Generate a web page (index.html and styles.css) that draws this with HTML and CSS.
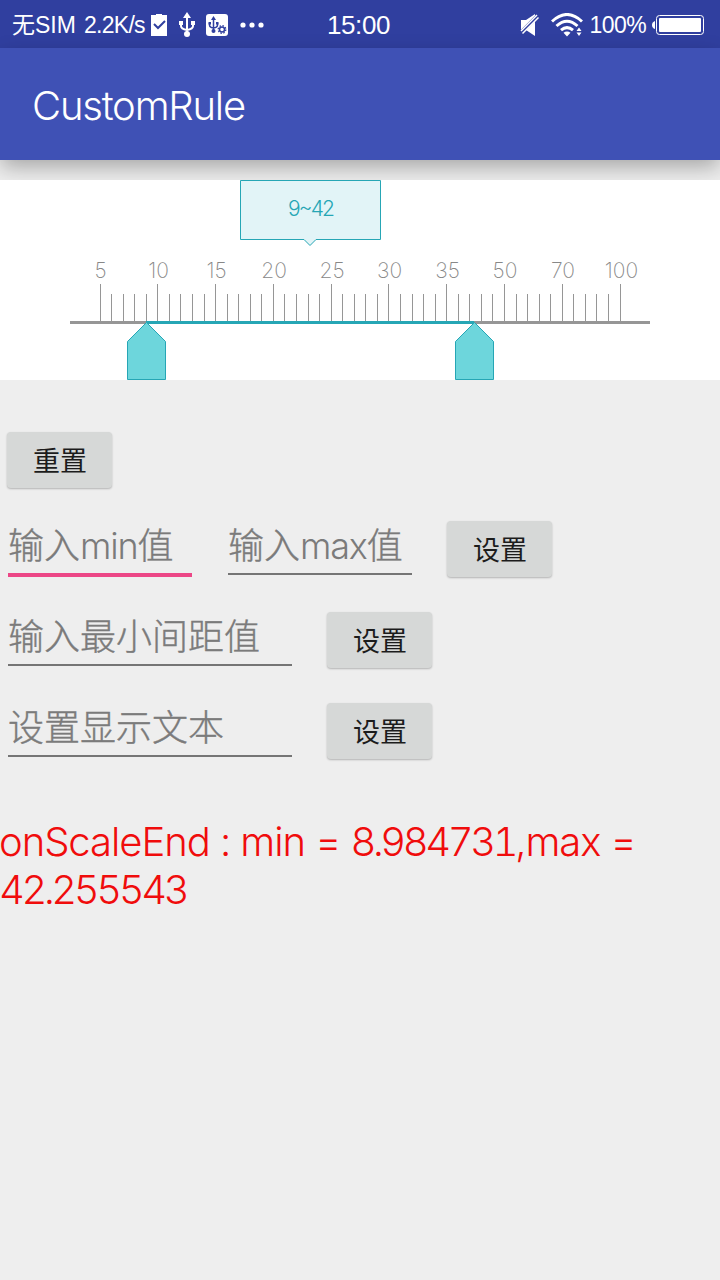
FILE: index.html
```
<!DOCTYPE html>
<html lang="zh-CN">
<head>
<meta charset="utf-8">
<title>CustomRule</title>
<link rel="stylesheet" href="styles.css">
</head>
<body>
<header class="status">
  <div class="status-left">
    <span class="sim">无SIM</span>
    <span class="speed">2.2K/s</span>
    <svg class="ic-clip" width="16" height="22" viewBox="0 0 16 22"><path fill="#fff" d="M0 1h5V0h6v1h5v21H0z"/><path fill="none" stroke="#303f9f" stroke-width="2" d="M3 10l4 4 7-7"/></svg>
    <svg class="ic-usb" width="16" height="26" viewBox="0 0 16 26"><path fill="none" stroke="#fff" stroke-width="2" d="M8 4v18M2 11v3q0 3 6 4q6-1 6-4v-3"/><path fill="#fff" d="M8 0l4 6H4zM0 9h4v4H0zM12 9h4v4h-4z"/><circle cx="8" cy="22" r="3" fill="#fff"/></svg>
    <svg class="ic-debug" width="22" height="22" viewBox="0 0 22 22"><rect width="22" height="22" rx="3" fill="#fff"/><path fill="none" stroke="#303f9f" stroke-width="1.5" d="M7.500 4v13M3.500 9v2q0 2.500 4 3q4-.5 4-3V9"/><path fill="#303f9f" d="M7.500 2l2.500 4H5zM2.500 8h2.500v2.500H2.500zM10 8h2.500v2.500H10z"/><circle cx="7.500" cy="17" r="2" fill="#303f9f"/><circle cx="16" cy="15.500" r="4.800" fill="#fff"/><circle cx="16" cy="15.500" r="2.500" fill="none" stroke="#303f9f" stroke-width="1.500"/><circle cx="16" cy="15.500" r="3.800" fill="none" stroke="#303f9f" stroke-width="1.300" stroke-dasharray="1.500 1.480"/></svg>
    <svg class="ic-more" width="24" height="6" viewBox="0 0 24 6" fill="#fff"><circle cx="3" cy="3" r="2.600"/><circle cx="12" cy="3" r="2.600"/><circle cx="21" cy="3" r="2.600"/></svg>
  </div>
  <span class="clock">15:00</span>
  <div class="status-right">
    <svg class="ic-mute" width="20" height="22" viewBox="0 0 20 22"><path fill="#fff" d="M1 6h5l9-6v22l-9-6H1z"/><path stroke="#303f9f" stroke-width="4" d="M0 19.500L18 1.500"/><path stroke="#fff" stroke-width="1.500" d="M1 17L17 1M2.500 19.500L18.500 3.500"/></svg>
    <svg class="ic-wifi" width="32" height="24" viewBox="0 0 32 24"><g fill="none" stroke="#fff" stroke-width="3"><path d="M1 8.500Q16-5.500 31 8.500"/><path d="M5.500 13Q16 3.500 26.500 13"/><path d="M10 17.200Q16 12 22 17.200"/></g><path fill="#fff" d="M12.500 19.700q3.500-2.500 7 0L16 23.500zM25.500 18l2.500-3.500 2.500 3.500zM25.500 19.500h5L28 23z"/></svg>
    <span class="percent">100%</span>
    <svg class="ic-batt" width="53" height="20" viewBox="0 0 53 20"><path fill="#fff" d="M3 6v8q-3-1-3-4t3-4z"/><rect x="4.500" y=".5" width="47" height="19" rx="3" fill="none" stroke="#fff"/><rect x="7" y="3" width="42" height="14" rx="1" fill="#fff"/></svg>
  </div>
</header>
<div class="toolbar"><h1 class="title">CustomRule</h1></div>
<main class="content">
  <svg class="ruler" width="720" height="200" viewBox="0 0 720 200">
    <path class="bubble" d="M240.500.5h140v59h-64.500l-6 6-6-6h-63.500z"/>
    <text class="bubble-text" x="288" y="36" textLength="47">9~42</text>
    <g class="labels">
      <text x="100.500" y="98">5</text><text x="158.500" y="98">10</text><text x="216.500" y="98">15</text><text x="274" y="98">20</text><text x="332" y="98">25</text><text x="389.500" y="98">30</text><text x="447.500" y="98">35</text><text x="505" y="98">50</text><text x="563" y="98">70</text><text x="621.500" y="98">100</text>
    </g>
    <path class="ticks" d="M100.500 104v38M157.500 104v38M215.500 104v38M273.500 104v38M331.500 104v38M388.500 104v38M446.500 104v38M504.500 104v38M562.500 104v38M620.500 104v38"/>
    <path class="ticks" d="M111.500 114v28M123.500 114v28M134.500 114v28M146.500 114v28M169.500 114v28M180.500 114v28M192.500 114v28M204.500 114v28M227.500 114v28M238.500 114v28M250.500 114v28M261.500 114v28M284.500 114v28M296.500 114v28M308.500 114v28M319.500 114v28M342.500 114v28M354.500 114v28M365.500 114v28M377.500 114v28M400.500 114v28M412.500 114v28M423.500 114v28M435.500 114v28M458.500 114v28M469.500 114v28M481.500 114v28M492.500 114v28M516.500 114v28M527.500 114v28M539.500 114v28M550.500 114v28M573.500 114v28M585.500 114v28M596.500 114v28M608.500 114v28"/>
    <path class="axis" d="M70 142.500h580"/>
    <path class="range" d="M146 142.500h328"/>
    <path class="thumb" d="M146.500 142.500l19 19v38h-38v-38z"/>
    <path class="thumb" d="M474.500 142.500l19 19v38h-38v-38z"/>
  </svg>
  <div class="row row-reset"><button class="btn">重置</button></div>
  <div class="row">
    <div class="field short focused">输入<span class="latin">min</span>值</div>
    <div class="field short">输入<span class="latin">max</span>值</div>
    <button class="btn">设置</button>
  </div>
  <div class="row">
    <div class="field">输入最小间距值</div>
    <button class="btn">设置</button>
  </div>
  <div class="row">
    <div class="field">设置显示文本</div>
    <button class="btn">设置</button>
  </div>
  <p class="result">onScaleEnd : min = <span class="num">8.984731</span>,max =<br><span class="num">42.255543</span></p>
</main>
</body>
</html>
```
FILE: styles.css
```
* { box-sizing: border-box; }
body { margin: 0; min-height: 1280px; background: #eee; font-family: Inter, "Noto Sans CJK SC", sans-serif; font-weight: 300; }
svg { display: block; flex: none; }
.status { height: 48px; background: #303f9f; color: #fff; display: grid; grid-template-columns: 1fr auto 1fr; align-items: center; padding: 0 15px 0 12px; font-family: "Liberation Sans", "Noto Sans CJK SC", sans-serif; font-weight: 400; white-space: nowrap; }
.status-left, .status-right { display: flex; align-items: center; }
.status-right { justify-content: flex-end; }
.sim { font-size: 23px; line-height: 48px; }
.speed { font-size: 23px; line-height: 48px; margin-left: 8px; letter-spacing: -0.7px; }
.ic-clip { margin-left: 6px; }
.ic-usb { margin-left: 12px; }
.ic-debug { margin-left: 11px; }
.ic-more { margin-left: 12px; }
.clock { font-size: 26px; line-height: 50px; letter-spacing: -0.4px; }
.ic-wifi { margin-left: 11px; }
.percent { font-size: 23px; line-height: 50px; margin-left: 7px; letter-spacing: -0.6px; }
.ic-batt { margin-left: 6px; }
.toolbar { position: relative; height: 112px; background: #3f51b5; padding: 0 32px; display: flex; align-items: center; box-shadow: 0 8px 20px -1px rgba(0, 0, 0, .3); }
.title { margin: 0; padding-top: 3px; font-size: 40px; font-weight: 300; color: #fff; letter-spacing: -1.2px; }
.content { padding-top: 20px; }
.ruler { position: relative; background: #fff; margin-bottom: 46px; }
.bubble { fill: #e2f4f7; stroke: #26a6b5; }
.bubble-text { fill: #26a6b5; font-size: 21px; font-weight: 300; }
.labels { fill: #888; font-size: 21px; font-weight: 200; text-anchor: middle; }
.ticks { stroke: #969696; fill: none; }
.axis { stroke: #969696; stroke-width: 3; }
.range { stroke: #26a6b5; stroke-width: 3; }
.thumb { fill: #6dd6dc; stroke: #26a6b5; }
.row { display: flex; align-items: flex-start; gap: 35px; height: 91px; padding: 3px 8px; }
.row-reset { padding: 6px 7px; margin-bottom: 1px; }
.field + .field { margin-left: 1px; }
.btn { width: 105px; height: 56px; margin: 0; padding: 0 0 0 1px; border: 0; border-radius: 4px; background: #d6d8d7; color: #1c1c1c; box-shadow: 0 1px 2px rgba(0, 0, 0, .25); font: 400 27px/56px "Noto Sans CJK SC", sans-serif; }
.field { width: 284px; height: 54px; border-bottom: 2px solid #757575; color: #7b7b7b; font-size: 36px; line-height: 51px; white-space: nowrap; -webkit-text-stroke: 0.4px #7b7b7b; }
.field.short { width: 184px; }
.field.focused { height: 56px; border-bottom: 4px solid #ec4686; }
.latin { letter-spacing: -1.2px; -webkit-text-stroke: 0; }
.result { margin: 0 0 0 -1px; padding-top: 27px; color: #f00c0c; font-size: 40px; line-height: 48px; white-space: nowrap; letter-spacing: -1.05px; }
.num { font-variant-numeric: tabular-nums; letter-spacing: -3.4px; }
```
